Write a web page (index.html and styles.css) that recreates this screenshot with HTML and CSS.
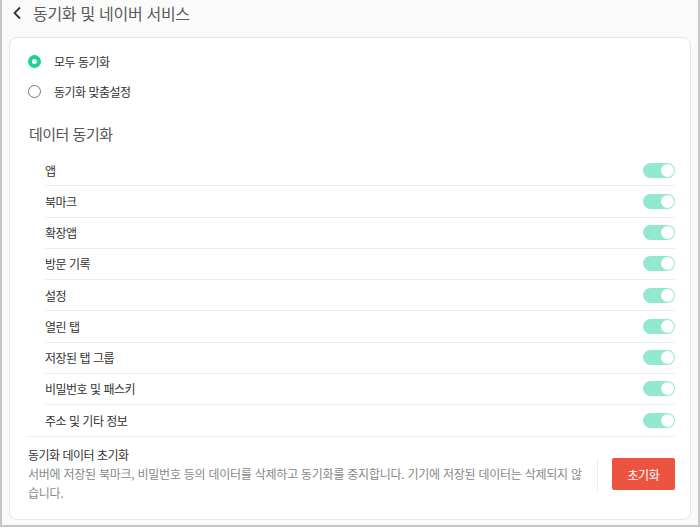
FILE: index.html
```html
<!DOCTYPE html>
<html lang="ko">
<head>
  <meta charset="UTF-8">
  <meta name="viewport" content="width=device-width, initial-scale=1.0">
  <title>동기화 및 네이버 서비스</title>
  <link rel="stylesheet" href="styles.css">
</head>
<body>
  <div class="frame">
    <header class="top-bar">
      <button class="btn-back" type="button" aria-label="뒤로">
        <svg width="10" height="14" viewBox="0 0 10 14"><path d="M8 1.5 L2.5 7 L8 12.5" fill="none" stroke="#333" stroke-width="1.8"/></svg>
      </button>
      <h1 class="page-title">동기화 및 네이버 서비스</h1>
    </header>

    <section class="card">
      <div class="radio-group">
        <label class="radio-item"><span class="radio checked"></span>모두 동기화</label>
        <label class="radio-item"><span class="radio"></span>동기화 맞춤설정</label>
      </div>

      <h2 class="section-title">데이터 동기화</h2>
      <ul class="sync-list">
        <li class="sync-row"><span>앱</span><span class="toggle"></span></li>
        <li class="sync-row"><span>북마크</span><span class="toggle"></span></li>
        <li class="sync-row"><span>확장앱</span><span class="toggle"></span></li>
        <li class="sync-row"><span>방문 기록</span><span class="toggle"></span></li>
        <li class="sync-row"><span>설정</span><span class="toggle"></span></li>
        <li class="sync-row"><span>열린 탭</span><span class="toggle"></span></li>
        <li class="sync-row"><span>저장된 탭 그룹</span><span class="toggle"></span></li>
        <li class="sync-row"><span>비밀번호 및 패스키</span><span class="toggle"></span></li>
        <li class="sync-row"><span>주소 및 기타 정보</span><span class="toggle"></span></li>
      </ul>

      <div class="reset-box">
        <div class="reset-text">
          <p class="reset-title">동기화 데이터 초기화</p>
          <p class="reset-desc">서버에 저장된 북마크, 비밀번호 등의 데이터를 삭제하고 동기화를 중지합니다. 기기에 저장된 데이터는 삭제되지 않습니다.</p>
        </div>
        <span class="divider"></span>
        <button class="btn-reset" type="button">초기화</button>
      </div>
    </section>
  </div>
</body>
</html>
```

FILE: styles.css
```css
* {
  box-sizing: border-box;
}
body {
  margin: 0;
  font-family: "Noto Sans CJK KR", "Noto Sans", sans-serif;
  color: #333;
  background-color: #fff;
}
.frame {
  height: 527px;
  border: 2px solid #c6c6c6;
  border-top: none;
  background-color: #fafafa;
  padding: 0 7px;
}

/* 상단 */
.top-bar {
  display: flex;
  align-items: center;
  height: 26px;
  margin-left: 3px;
}
.btn-back {
  display: flex;
  padding: 0;
  border: none;
  background: none;
  margin-right: 11px;
}
.page-title {
  margin: 0;
  font-size: 16px;
  font-weight: 400;
  letter-spacing: -0.3px;
  color: #5a5a5a;
}

/* 카드 */
.card {
  margin-top: 11px;
  height: 483px;
  padding: 8px 15px 0 16px;
  background-color: #fff;
  border: 1px solid #e6e6e6;
  border-radius: 8px;
}
.radio-group {
  padding-left: 2px;
}
.radio-item {
  display: flex;
  align-items: center;
  height: 30px;
  font-size: 12px;
  letter-spacing: -0.5px;
}
.radio {
  width: 13px;
  height: 13px;
  margin-right: 13px;
  border-radius: 50%;
  border: 1px solid #777;
}
.radio.checked {
  border: 4px solid #1fcf9c;
}

.section-title {
  margin: 16px 0 0 3px;
  height: 24px;
  line-height: 24px;
  font-size: 15px;
  font-weight: 400;
  letter-spacing: -0.5px;
  color: #555;
}

.sync-list {
  list-style: none;
  margin: 9px 0 0;
  padding: 0 0 0 19px;
  border-bottom: 1px solid #eee;
}
.sync-row {
  display: flex;
  align-items: center;
  justify-content: space-between;
  height: 31.25px;
  font-size: 12px;
  letter-spacing: -0.5px;
  border-bottom: 1px solid #eee;
}
.sync-row:last-child {
  border-bottom: none;
}
.toggle {
  position: relative;
  width: 32px;
  height: 15px;
  border-radius: 8px;
  background-color: #93e9cf;
}
.toggle::after {
  content: "";
  position: absolute;
  top: 1px;
  right: 1px;
  width: 13px;
  height: 13px;
  border-radius: 50%;
  background-color: #fff;
}

/* 초기화 */
.reset-box {
  display: flex;
  align-items: flex-start;
  padding: 9px 0 0 2px;
}
.reset-text {
  flex: 1;
  padding-right: 6px;
}
.reset-title {
  margin: 0;
  height: 18px;
  line-height: 18px;
  font-size: 12px;
  letter-spacing: -0.5px;
  color: #333;
}
.reset-desc {
  margin: 0;
  line-height: 19px;
  font-size: 12px;
  letter-spacing: -0.25px;
  color: #888;
}
.divider {
  width: 1px;
  height: 32px;
  margin-top: 13px;
  background-color: #eee;
}
.btn-reset {
  width: 63px;
  height: 32px;
  margin: 12px 0 0 14px;
  border: none;
  border-radius: 2px;
  background-color: #ec5340;
  color: #fff;
  font-family: inherit;
  font-size: 12px;
  letter-spacing: -0.3px;
}
```
